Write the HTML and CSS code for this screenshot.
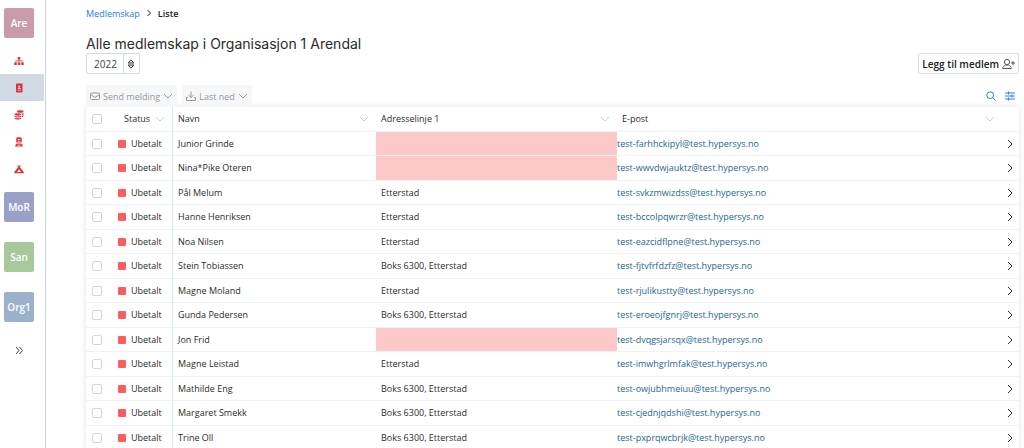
FILE: index.html
```html
<!DOCTYPE html>
<html lang="no">
<head>
    <meta charset="UTF-8">
    <meta name="viewport" content="width=device-width, initial-scale=1.0">
    <title>Medlemskap - Liste</title>
    <link rel="stylesheet" href="styles.css">
</head>
<body>
    <nav class="sidebar" aria-label="Organisasjoner">
        <a class="org org-are" href="#">Are</a>
        <a class="side-link" href="#" aria-label="Organisasjon">
            <svg class="icon" viewBox="0 0 20 16"><path d="M7.500 0h5v5h-1.700v2H17v4h2.500v5h-5v-5h1V8.500h-4.700V11h1.700v5h-5v-5h1.700V8.500H4.500V11h1v5h-5v-5H3V7h6.200V5H7.500z" fill="currentColor"/></svg>
        </a>
        <a class="side-link active" href="#" aria-label="Medlemskap">
            <svg class="icon" viewBox="0 0 20 16"><rect x="4" y="-1" width="13" height="18" rx="1.500" fill="currentColor"/><g fill="#d1d9e4"><circle cx="10.500" cy="5" r="2"/><path d="M7.500 10c0-4 6-4 6 0zM7 11.500h7v1.500H7z"/></g></svg>
        </a>
        <a class="side-link" href="#" aria-label="Økonomi">
            <svg class="icon" viewBox="0 0 20 16"><g fill="currentColor"><ellipse cx="12.500" cy="1" rx="6.500" ry="2.500"/><path d="M19 3v3c0 1-1 1.700-3.500 2.200V5.300c2-.5 3-1.300 3.500-2.300zM19 7.500V10c0 1-1 1.700-3.500 2.200V9.700c2-.4 3-1.200 3.500-2.200z"/><ellipse cx="7.500" cy="7" rx="6.500" ry="2.300"/><path d="M1 9.500c2.500 1.700 10.500 1.700 13 0v2c-1 2-12 2-13 0zM1 13.500c2.500 1.600 10.500 1.600 13 0v1.500c-1 2.500-12 2.500-13 0z"/></g></svg>
        </a>
        <a class="side-link" href="#" aria-label="Arrangement">
            <svg class="icon" viewBox="0 0 20 16"><path d="M4.500 0c0-2 11-2 11 0v9h-11zM2.500 17c0-4 2-6 4-6h7c2 0 4 2 4 6z" fill="currentColor"/><path d="M7.500 2h5v1.500h-5zM7.500 5.500h5v1.500h-5zM7 13.500h6v1.500H7z" fill="#fff"/></svg>
        </a>
        <a class="side-link" href="#" aria-label="Leir">
            <svg class="icon" viewBox="0 0 20 16"><path d="M8 0l2 2.500L12 0l1.500 1-2 3L19.500 14v2.500H.5V14L8.500 4l-2-3z" fill="currentColor"/><path d="M10 8.500l4 5.500H6z" fill="#fff"/></svg>
        </a>
        <a class="org org-mor" href="#">MoR</a>
        <a class="org org-san" href="#">San</a>
        <a class="org org-org1" href="#">Org1</a>
        <button class="expand" type="button" aria-label="Utvid meny">
            <svg class="icon-line" viewBox="0 0 10 10"><path d="M2 2l3 3.500L2 9M5.500 2l3 3.500-3 3.500"/></svg>
        </button>
    </nav>

    <main class="content">
        <nav class="breadcrumb" aria-label="Brødsmuler">
            <a href="#">Medlemskap</a>
            <svg class="icon-line" viewBox="0 0 10 10"><path d="M3.500 2L6.500 5l-3 3"/></svg>
            <span>Liste</span>
        </nav>
        <h1>Alle medlemskap i Organisasjon 1 Arendal</h1>
        <div class="top-row">
            <div class="year">
                <select aria-label="År">
                    <option>2022</option>
                </select>
                <svg class="icon-line" viewBox="0 0 10 10"><path d="M5 .8L7.800 4H2.200zM5 9.200L7.800 6H2.200z"/></svg>
            </div>
            <button class="add" type="button">
                Legg til medlem
                <svg class="icon-line" viewBox="0 0 13 12"><circle cx="5" cy="4" r="2.600"/><path d="M.7 10.500c0-2 1-2.500 3-3.500h2.600c2 1 3 1.500 3 3.500zM9 5h4M11 3v4"/></svg>
            </button>
        </div>
        <div class="toolbar">
            <button class="tool" type="button">
                <svg class="icon-line" viewBox="0 0 10 10"><rect x=".5" y="2" width="9" height="6.500" rx="1"/><path d="M.5 3.500L5 6.500l4.500-3"/></svg>
                Send melding
                <svg class="icon-line" viewBox="0 0 10 10"><path d="M1 3l4 4 4-4"/></svg>
            </button>
            <button class="tool" type="button">
                <svg class="icon-line" viewBox="0 0 10 10"><path d="M5 .5v6M2.500 4.200L5 6.500l2.500-2.300M2 6.500H.5v3h9v-3H8"/></svg>
                Last ned
                <svg class="icon-line" viewBox="0 0 10 10"><path d="M1 3l4 4 4-4"/></svg>
            </button>
            <button class="tool-icon push" type="button" aria-label="Søk">
                <svg class="icon-line" viewBox="0 0 10 10"><circle cx="4.200" cy="4.200" r="3.400"/><path d="M6.700 6.700L9.500 9.500"/></svg>
            </button>
            <button class="tool-icon" type="button" aria-label="Filter">
                <svg class="icon-line" viewBox="0 0 10 10"><path d="M0 2h10M0 5h10M0 8h10M3.500 .5v3M7 3.500v3M3.500 6.500v3"/></svg>
            </button>
        </div>
        <table class="members">
            <thead>
                <tr>
                    <th class="col-check"><input type="checkbox" aria-label="Velg alle"></th>
                    <th class="col-status"><div class="head">Status <svg class="icon-line" viewBox="0 0 10 10"><path d="M1 3l4 4 4-4"/></svg></div></th>
                    <th class="col-name"><div class="head">Navn <svg class="icon-line" viewBox="0 0 10 10"><path d="M1 3l4 4 4-4"/></svg></div></th>
                    <th class="col-address"><div class="head">Adresselinje 1 <svg class="icon-line" viewBox="0 0 10 10"><path d="M1 3l4 4 4-4"/></svg></div></th>
                    <th class="col-mail"><div class="head">E-post <svg class="icon-line" viewBox="0 0 10 10"><path d="M1 3l4 4 4-4"/></svg></div></th>
                    <th class="col-open"></th>
                </tr>
            </thead>
            <tbody id="rows"></tbody>
        </table>
    </main>
    <script src="script.js"></script>
</body>
</html>
```
FILE: styles.css
```css
* {
    box-sizing: border-box;
}
body {
    margin: 0;
    display: flex;
    height: 100vh;
    overflow: hidden;
    background: #fff;
    color: #2b2b2b;
    font-family: "Open Sans", sans-serif;
    font-size: 9px;
}
a {
    color: #1c6793;
    text-decoration: none;
}
button {
    font: inherit;
    cursor: pointer;
}
.icon {
    width: 10px;
    height: 8px;
    overflow: visible;
}
.icon-line {
    width: 10px;
    height: 10px;
    fill: none;
    stroke: currentColor;
    flex: none;
}

/* sidebar */
.sidebar {
    flex: none;
    display: flex;
    flex-direction: column;
    width: 46px;
    padding-top: 8px;
    border-right: 1px solid #cbd6e8;
}
.org {
    display: flex;
    align-items: center;
    justify-content: center;
    width: 30px;
    height: 30px;
    margin: 0 0 20px 4px;
    border-radius: 2px;
    color: #fff;
    font-size: 10px;
    font-weight: 600;
}
.org-are {
    margin-bottom: 9px;
    background: #c99aaa;
}
.org-mor {
    margin-top: 10px;
    background: #9aa1c9;
}
.org-san {
    background: #a6c89a;
}
.org-org1 {
    background: #9ab1c9;
}
.side-link {
    display: flex;
    align-items: center;
    justify-content: center;
    width: 44px;
    height: 27px;
    padding-right: 6px;
    color: #db3236;
}
.side-link.active {
    background: #d1d9e4;
}
.expand {
    width: 30px;
    margin-left: 4px;
    padding: 3px 0;
    border: 0;
    background: none;
    color: #444;
}

/* content */
.content {
    flex: 1;
    min-width: 0;
    padding: 6px 5px 0 40px;
}
.breadcrumb {
    display: flex;
    align-items: center;
    gap: 4px;
    height: 14px;
    color: #222;
}
.breadcrumb a {
    color: #2680e3;
}
.breadcrumb span {
    font-weight: 600;
}
h1 {
    margin: 15px 0 0;
    font-family: Inter, sans-serif;
    font-size: 14px;
    font-weight: 400;
    line-height: 18px;
}
.top-row {
    display: flex;
    align-items: center;
    justify-content: space-between;
}
.year {
    display: flex;
    align-items: center;
    height: 21px;
    padding-right: 3px;
    border: 1px solid #cfdcea;
    border-radius: 2px;
}
.year select {
    appearance: none;
    width: 37px;
    height: 19px;
    margin-right: 2px;
    padding: 0 0 0 7px;
    border: 0;
    border-right: 1px solid #cfdcea;
    background: none;
    color: #444;
    font: inherit;
    font-size: 10px;
}
.add {
    display: flex;
    align-items: center;
    gap: 3px;
    height: 21px;
    padding: 0 3px;
    border: 1px solid #d5dfea;
    border-radius: 2px;
    background: #fff;
    color: #222;
    font-size: 10px;
    font-weight: 600;
}
.add .icon-line {
    width: 13px;
    height: 12px;
    color: #555;
}
.toolbar {
    display: flex;
    gap: 5px;
    height: 22px;
    margin-top: 11px;
}
.tool {
    display: flex;
    align-items: center;
    gap: 3px;
    padding: 0 4px;
    border: 0;
    background: #f5f7fa;
    color: #999;
}
.tool-icon {
    display: flex;
    align-items: center;
    padding: 0 4px 0 0;
    border: 0;
    background: none;
    color: #2680e3;
}
.tool-icon.push {
    margin-left: auto;
}

/* table */
.members {
    width: 100%;
    table-layout: fixed;
    border-collapse: separate;
    border-spacing: 0;
    box-shadow: 0 0 6px #dfe4ea;
}
.members th,
.members td {
    height: 24px;
    padding: 0 0 0 5px;
    border-bottom: 1px solid #eef1f6;
    font-weight: 400;
    line-height: 12px;
    text-align: left;
    white-space: nowrap;
}
.members th,
.members tr:nth-child(even) td {
    height: 25px;
}
.members .col-status {
    width: 55px;
    border-right: 1px solid #d3e8fa;
}
.members th.col-status {
    padding-left: 6px;
}
.members td.col-status {
    padding-left: 0;
}
.members .col-check {
    width: 32px;
    padding-left: 6px;
}
.col-name {
    width: 203px;
}
.col-address {
    width: 241px;
}
.members .col-open {
    width: 14px;
    padding: 0;
}
.col-open .icon-line {
    display: block;
}
.head {
    display: flex;
    align-items: center;
    justify-content: space-between;
    padding-right: 7px;
}
.col-mail .head {
    padding-right: 10px;
}
.head .icon-line {
    color: #b5d5f5;
}
.members .mail {
    padding-left: 0;
}
.members .missing {
    background: #fdc8c8;
}
.members input {
    appearance: none;
    display: block;
    width: 10px;
    height: 10px;
    margin: 0;
    border: 1px solid #cdd7e4;
    border-radius: 2px;
}
.status {
    display: flex;
    align-items: center;
    gap: 5px;
}
.status::before {
    content: "";
    width: 8px;
    height: 8px;
    border-radius: 1px;
    background: #fc5d5d;
}
```
FILE: script.js
```js
const members = [
    ['Junior Grinde', '', 'test-farhhckipyl@test.hypersys.no'],
    ['Nina*Pike Oteren', '', 'test-wwvdwjauktz@test.hypersys.no'],
    ['Pål Melum', 'Etterstad', 'test-svkzmwizdss@test.hypersys.no'],
    ['Hanne Henriksen', 'Etterstad', 'test-bccolpqwrzr@test.hypersys.no'],
    ['Noa Nilsen', 'Etterstad', 'test-eazcidflpne@test.hypersys.no'],
    ['Stein Tobiassen', 'Boks 6300, Etterstad', 'test-fjtvfrfdzfz@test.hypersys.no'],
    ['Magne Moland', 'Etterstad', 'test-rjulikustty@test.hypersys.no'],
    ['Gunda Pedersen', 'Boks 6300, Etterstad', 'test-eroeojfgnrj@test.hypersys.no'],
    ['Jon Frid', '', 'test-dvqgsjarsqx@test.hypersys.no'],
    ['Magne Leistad', 'Etterstad', 'test-imwhgrlmfak@test.hypersys.no'],
    ['Mathilde Eng', 'Boks 6300, Etterstad', 'test-owjubhmeiuu@test.hypersys.no'],
    ['Margaret Smekk', 'Boks 6300, Etterstad', 'test-cjednjqdshi@test.hypersys.no'],
    ['Trine Oll', 'Boks 6300, Etterstad', 'test-pxprqwcbrjk@test.hypersys.no']
];

document.getElementById('rows').innerHTML = members.map(([name, address, mail]) => `
    <tr>
        <td class="col-check"><input type="checkbox" aria-label="Velg ${name}"></td>
        <td class="col-status"><div class="status">Ubetalt</div></td>
        <td>${name}</td>
        <td class="${address ? '' : 'missing'}">${address}</td>
        <td class="mail"><a href="mailto:${mail}">${mail}</a></td>
        <td class="col-open"><svg class="icon-line" viewBox="0 0 10 10"><path d="M3 1l4 4-4 4"/></svg></td>
    </tr>`).join('');
```
